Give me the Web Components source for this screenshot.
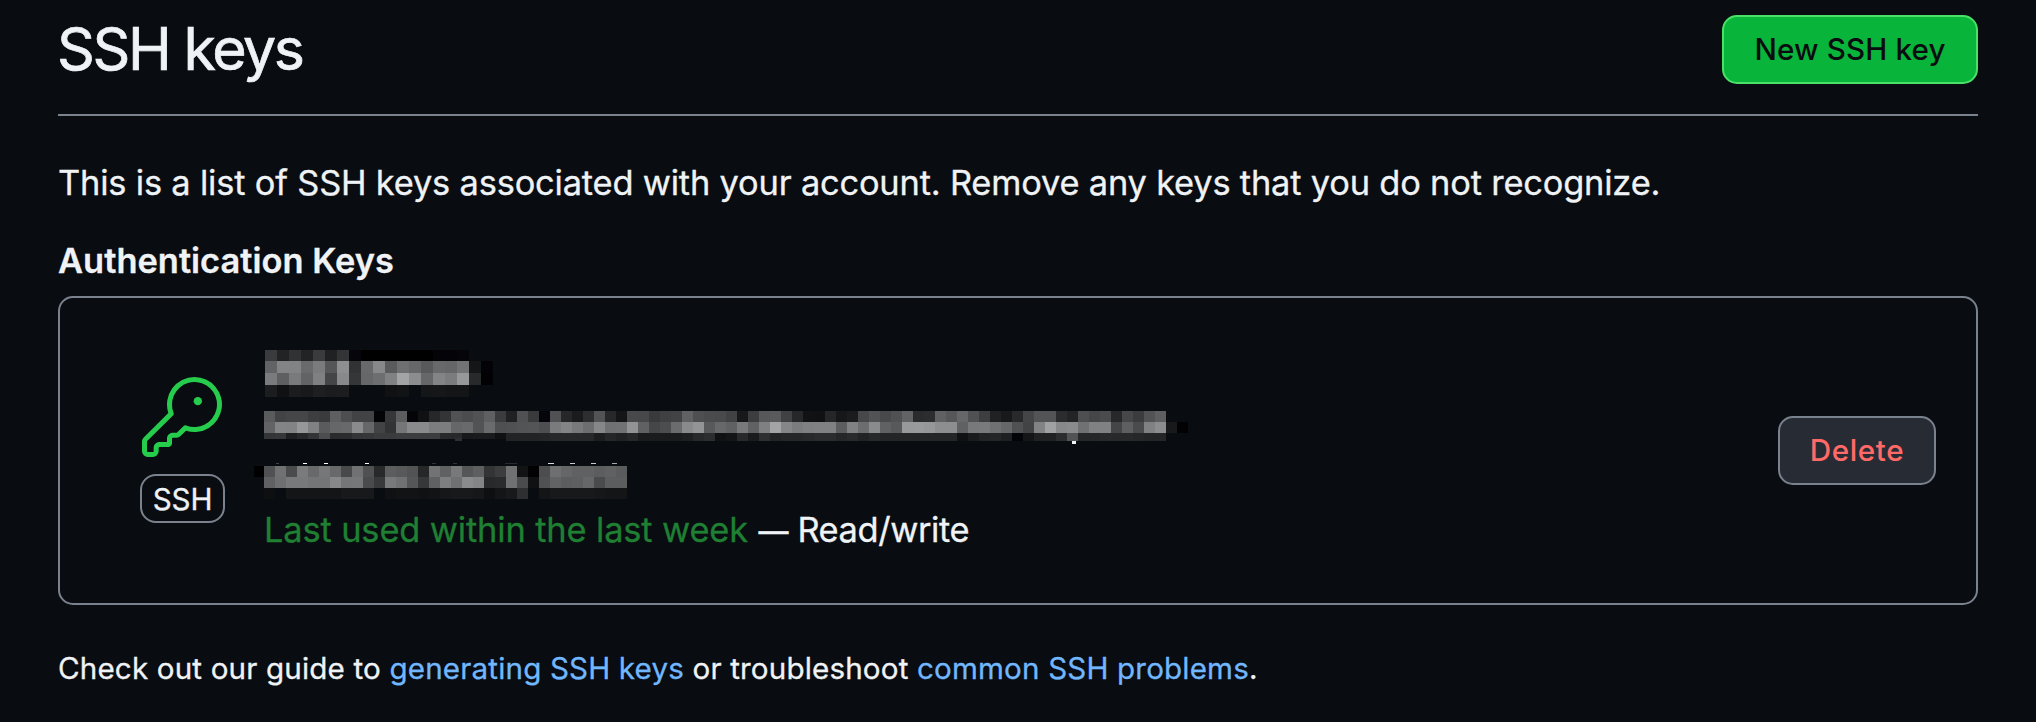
<!DOCTYPE html>
<html lang="en">
<head>
<meta charset="utf-8">
<title>SSH keys</title>
<style>
  body { margin: 0; background: #090c10; color: #f0f3f6; font-family: Inter, "Liberation Sans", sans-serif; font-weight: 400; -webkit-text-stroke: .3px currentColor; }
</style>
</head>
<body>
<settings-page></settings-page>

<template id="t-action-button">
  <style>
    :host { display: block; flex: none; }
    button {
      display: flex; align-items: center; justify-content: center; box-sizing: border-box;
      width: 100%; height: 69px; padding: 0 0 2px; border-radius: 15px; border: 2px solid #7a828e;
      background: #272b33; color: #ff6a69; font: 500 29.6px/40px Inter, "Liberation Sans", sans-serif;
      letter-spacing: .6px; -webkit-text-stroke: 0;
    }
    :host([variant="primary"]) button { background: #09b43a; border-color: #4ae168; color: #0a0c10; letter-spacing: .14px; }
  </style>
  <button type="button"><slot></slot></button>
</template>

<template id="t-page-header">
  <style>
    :host { display: flex; align-items: center; justify-content: space-between; height: 69px; padding: 15px 0 30px; border-bottom: 2px solid #7a828e; }
    h2 { margin: -2px 0 0 -1px; font-weight: 400; font-size: 59px; line-height: 69px; letter-spacing: -2.4px; -webkit-text-stroke: .7px currentColor; }
    action-button { width: 256px; }
  </style>
  <h2><slot></slot></h2>
  <action-button variant="primary"><slot name="action"></slot></action-button>
</template>

<template id="t-key-badge">
  <style>
    :host { display: flex; flex-direction: column; align-items: center; width: 85px; flex: none; padding-bottom: 1px; }
    svg { display: block; width: 80px; height: 80px; fill: #26cd4d; margin-right: 1px; }
    span { box-sizing: border-box; width: 85px; height: 49px; margin-top: 17px; border: 2px solid #7a828e; border-radius: 16px; font-size: 29.6px; line-height: 46px; text-align: center; letter-spacing: -.1px; }
  </style>
  <svg viewBox="0 0 24 24" aria-hidden="true">
    <path d="M16.75 8.5a1.25 1.25 0 1 0 0-2.5 1.25 1.25 0 0 0 0 2.5Z"/>
    <path d="M15.75 0a8.25 8.25 0 1 1-2.541 16.101l-1.636 1.636a1.744 1.744 0 0 1-1.237.513H9.25a.25.25 0 0 0-.25.25v1.448a.876.876 0 0 1-.256.619l-.214.213a.75.75 0 0 1-.545.22H5.25a.25.25 0 0 0-.25.25v1A1.75 1.75 0 0 1 3.25 24h-1.5A1.75 1.75 0 0 1 0 22.25v-2.836c0-.464.185-.908.513-1.236l7.386-7.388A8.249 8.249 0 0 1 15.75 0ZM9 8.25a6.733 6.733 0 0 0 .463 2.462.75.75 0 0 1-.168.804l-7.722 7.721a.25.25 0 0 0-.073.177v2.836c0 .138.112.25.25.25h1.5a.25.25 0 0 0 .25-.25v-1c0-.966.784-1.75 1.75-1.75H7.5v-1c0-.966.784-1.75 1.75-1.75h1.086a.25.25 0 0 0 .177-.073l1.971-1.972a.75.75 0 0 1 .804-.168A6.75 6.75 0 1 0 9 8.25Z"/>
  </svg>
  <span><slot></slot></span>
</template>

<template id="t-key-card">
  <style>
    :host { display: flex; align-items: center; box-sizing: border-box; height: 309px; padding: 0 40px 0 80px; border: 2px solid #7a828e; border-radius: 15px; }
    .details { flex: 1; margin-left: 29px; padding-top: 5px; }
    .row1 { margin: 0 0 14px 11px; }
    .row2 { margin: 0 0 18px 10px; }
    .row3 { margin: 0 0 3px 0; }
    .status { margin-left: 10px; font-size: 34.4px; line-height: 53px; white-space: nowrap; letter-spacing: -.4px; }
    .recent { color: #1f7f33; letter-spacing: -.135px; }
    .dash { font-size: 30px; line-height: 1; font-weight: 500; margin-left: 1px; }
    action-button { width: 158px; }
  </style>
  <key-badge>SSH</key-badge>
  <div class="details">
    <pixel-mosaic class="row1" data-kind="title"></pixel-mosaic>
    <pixel-mosaic class="row2" data-kind="fingerprint"></pixel-mosaic>
    <pixel-mosaic class="row3" data-kind="added"></pixel-mosaic>
    <div class="status"><span class="recent"><slot name="recent"></slot> </span><span class="dash">—</span> <slot name="access"></slot></div>
  </div>
  <action-button><slot name="action"></slot></action-button>
</template>

<template id="t-settings-page">
  <style>
    :host { display: block; box-sizing: border-box; height: 722px; padding: 0 58px; overflow: hidden; }
    p, h3 { margin: 0; white-space: nowrap; }
    .intro { margin-top: 40px; font-size: 34.4px; line-height: 53px; letter-spacing: -.185px; }
    h3 { margin: 25px 0 9px; font-size: 34.4px; line-height: 53px; font-weight: 600; letter-spacing: .03px; }
    .guide { margin-top: 41px; font-size: 29.6px; line-height: 45px; letter-spacing: .16px; }
    a { color: #71b7ff; text-decoration: none; -webkit-text-stroke: .3px #71b7ff; }
    .intro, .guide { -webkit-text-stroke-width: .3px; }
  </style>
  <page-header>SSH keys<span slot="action">New SSH key</span></page-header>
  <p class="intro">This is a list of SSH keys associated with your account. Remove any keys that you do not recognize.</p>
  <h3>Authentication Keys</h3>
  <key-card>
    <span slot="recent">Last used within the last week</span>
    <span slot="access">Read/write</span>
    <span slot="action">Delete</span>
  </key-card>
  <p class="guide">Check out our guide to <a href="#">generating SSH keys</a> or troubleshoot <a href="#">common SSH problems</a>.</p>
</template>

<script>
  // Each mosaic: cell width, drawing size, rows of [top, height, hex greys], single marks [x, y, w, h, colour].
  const MOSAICS = {
    title: { x: 0, cell: 12, width: 228, height: 47, rows: [
      [0, 11, '3a2231223a20330b00000000000008080a0c0c'],
      [11, 12, '628382697a558e3168875a6e66586865721507'],
      [23, 12, '7a5e79627f44883566 6d80a38c66837b972804'],
      [35, 12, '1c101b181e1b1c0c0c0c10120c151614140c0c']], ticks: [] },
    fingerprint: { x: 0, cell: 11, width: 924, height: 34, rows: [
      [0, 11, '5a4245453d3a5e4d4242 08365c09102633514b51 5f3b2050390b50261a2d 5227144847393f42604e 4a4941173c5759402611 1025161b47524850622a 2c605666503d20182844 53532b234e454a27463b 525e0c0c'],
      [11, 11, '62838296805a66688a66 42327589897c7c666952 6a4f5053544e7a83786d 8670719260454c6b8993 58676078607fa3857b7f 80805c806c8a60589899 968d8d60787970665042 82a0878a708080445e4a 808c1804'],
      [22, 6, '34361d26334c2a2b3436 3a3a3c3c3b3c2827181a 1a102222222427272727 1c2520261a1a1a1a1e27 2c1014281a2e22252528 2b2b2529222824242424 242424101a22241e0814 20202c52262528282826 2424'],
      [28, 2, '00000000000000000000 0000000000000000 0000 0000222222242727 2727 1c2520261a1a1a1a1e27 2c1014281a2e22252528 2b2b2529222824242424 242424101a22241e0814 20202c52262528282826 2424']],
      ticks: [[0, 28, 242, 2, '#090c10'], [191, 27, 7, 3, '#2c2f33'], [808, 30, 4, 3, '#f0f3f6']] },
    added: { x: 10, cell: 11, width: 374, height: 37, rows: [
      [3, 11, '50704a7a687668487050 285c5852267260785 55e 333c7012054c 6e6560605c605a'],
      [14, 11, '606e787874748775764a 38787055 36607e708a84 282a704a1050 625c5e664a5c5c'],
      [25, 11, '0e0c1414141414181818 0c101212101216181816 0e14182e0c14 18181818161414']],
      ticks: [[0, 3, 10, 11, '#000'], [22, 0, 3, 1, '#444'], [49, 0, 4, 1, '#fff'], [70, 0, 4, 1, '#fff'], [111, 0, 4, 1, '#fff'],
        [178, 0, 4, 1, '#333'], [199, 0, 4, 1, '#333'], [251, 0, 12, 1, '#2a2a2c'], [294, 0, 6, 1, '#ddd'],
        [316, 0, 5, 1, '#ccc'], [337, 0, 5, 1, '#ccc'], [358, 0, 5, 1, '#aaa']] }
  };

  class TemplateElement extends HTMLElement {
    constructor() {
      super();
      const source = document.getElementById('t-' + this.localName);
      this.attachShadow({ mode: 'open' }).append(source.content.cloneNode(true));
    }
  }

  class PixelMosaic extends HTMLElement {
    connectedCallback() {
      const m = MOSAICS[this.dataset.kind];
      let rects = '';
      for (const [y, h, greys] of m.rows) {
        greys.replace(/ /g, '').match(/../g).forEach((hex, i) => {
          if (hex === '0c') return; // page background shows through
          const g = parseInt(hex, 16);
          const fill = g < 12 ? `rgb(${g >> 1},${g >> 1},${g})` : `rgb(${g},${g + 1},${g + 3})`;
          rects += `<rect x="${m.x + i * m.cell}" y="${y}" width="${m.cell}" height="${h}" fill="${fill}"/>`;
        });
      }
      for (const [x, y, w, h, fill] of m.ticks) rects += `<rect x="${x}" y="${y}" width="${w}" height="${h}" fill="${fill}"/>`;
      const root = this.shadowRoot || this.attachShadow({ mode: 'open' });
      root.innerHTML = `<style>:host{display:block}svg{display:block;overflow:visible}</style>
        <svg width="${m.width}" height="${m.height}" shape-rendering="crispEdges" aria-hidden="true">${rects}</svg>`;
    }
  }

  customElements.define('pixel-mosaic', PixelMosaic);
  for (const name of ['action-button', 'key-badge', 'page-header', 'key-card', 'settings-page']) {
    customElements.define(name, class extends TemplateElement {});
  }
</script>
</body>
</html>
